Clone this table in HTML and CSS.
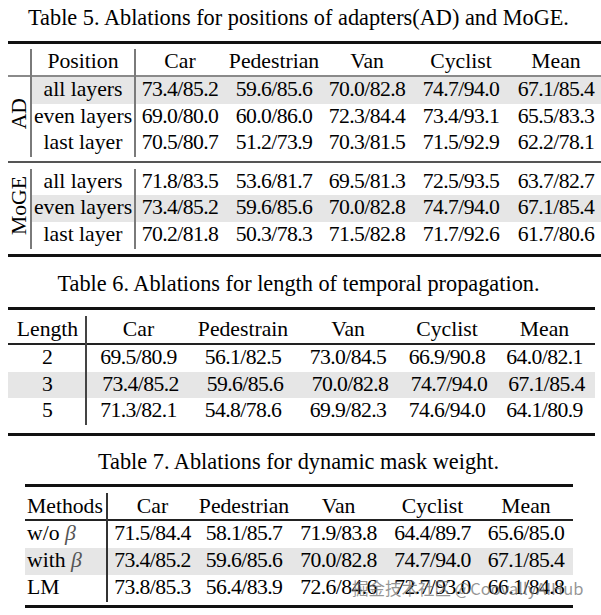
FILE: index.html
```html
<!DOCTYPE html>
<html>
<head>
<meta charset="utf-8">
<link rel="stylesheet" href="styles.css">
</head>
<body>
<div class="cap cap5">Table 5. Ablations for positions of adapters(AD) and MoGE.</div>
<table class="tbl t5">
  <colgroup><col><col><col><col><col><col><col><col></colgroup>
  <tr class="sp"><td colspan="8"></td></tr>
  <tr class="hd"><td></td><td class="pos">Position</td><td>Car</td><td>Pedestrian</td><td>Van</td><td>Cyclist</td><td>Mean</td><td></td></tr>
  <tr class="r27 hl"><td class="grp" rowspan="3"><span class="rot">AD</span></td><td class="pos">all layers</td><td class="n">73.4/85.2</td><td class="n">59.6/85.6</td><td class="n">70.0/82.8</td><td class="n">74.7/94.0</td><td class="n">67.1/85.4</td><td></td></tr>
  <tr class="r26"><td class="pos">even layers</td><td class="n">69.0/80.0</td><td class="n">60.0/86.0</td><td class="n">72.3/84.4</td><td class="n">73.4/93.1</td><td class="n">65.5/83.3</td><td></td></tr>
  <tr class="r27"><td class="pos">last layer</td><td class="n">70.5/80.7</td><td class="n">51.2/73.9</td><td class="n">70.3/81.5</td><td class="n">71.5/92.9</td><td class="n">62.2/78.1</td><td></td></tr>
  <tr class="sep"><td colspan="8"><div class="midrule"></div></td></tr>
  <tr class="r26"><td class="grp" rowspan="3"><span class="rot">MoGE</span></td><td class="pos">all layers</td><td class="n">71.8/83.5</td><td class="n">53.6/81.7</td><td class="n">69.5/81.3</td><td class="n">72.5/93.5</td><td class="n">63.7/82.7</td><td></td></tr>
  <tr class="r27 hl"><td class="pos">even layers</td><td class="n">73.4/85.2</td><td class="n">59.6/85.6</td><td class="n">70.0/82.8</td><td class="n">74.7/94.0</td><td class="n">67.1/85.4</td><td></td></tr>
  <tr class="r27"><td class="pos">last layer</td><td class="n">70.2/81.8</td><td class="n">50.3/78.3</td><td class="n">71.5/82.8</td><td class="n">71.7/92.6</td><td class="n">61.7/80.6</td><td></td></tr>
  <tr class="sp5"><td colspan="8"></td></tr>
</table>

<div class="cap cap6">Table 6. Ablations for length of temporal propagation.</div>
<table class="tbl t6">
  <colgroup><col><col><col><col><col><col></colgroup>
  <tr class="sp"><td colspan="6"></td></tr>
  <tr class="hd"><td class="first">Length</td><td>Car</td><td>Pedestrain</td><td>Van</td><td>Cyclist</td><td>Mean</td></tr>
  <tr class="r27"><td class="first">2</td><td class="n">69.5/80.9</td><td class="n">56.1/82.5</td><td class="n">73.0/84.5</td><td class="n">66.9/90.8</td><td class="n">64.0/82.1</td></tr>
  <tr class="r26 hl shift"><td class="first">3</td><td class="n">73.4/85.2</td><td class="n">59.6/85.6</td><td class="n">70.0/82.8</td><td class="n">74.7/94.0</td><td class="n">67.1/85.4</td></tr>
  <tr class="r27"><td class="first">5</td><td class="n">71.3/82.1</td><td class="n">54.8/78.6</td><td class="n">69.9/82.3</td><td class="n">74.6/94.0</td><td class="n">64.1/80.9</td></tr>
  <tr class="sp8"><td colspan="6"></td></tr>
</table>

<div class="cap cap7">Table 7. Ablations for dynamic mask weight.</div>
<table class="tbl t7">
  <colgroup><col><col><col><col><col><col></colgroup>
  <tr class="sp"><td colspan="6"></td></tr>
  <tr class="hd"><td class="first">Methods</td><td>Car</td><td>Pedestrian</td><td>Van</td><td>Cyclist</td><td>Mean</td></tr>
  <tr class="r27"><td class="first">w/o <span class="beta">β</span></td><td class="n">71.5/84.4</td><td class="n">58.1/85.7</td><td class="n">71.9/83.8</td><td class="n">64.4/89.7</td><td class="n">65.6/85.0</td></tr>
  <tr class="r27 hl"><td class="first">with <span class="beta">β</span></td><td class="n">73.4/85.2</td><td class="n">59.6/85.6</td><td class="n">70.0/82.8</td><td class="n">74.7/94.0</td><td class="n">67.1/85.4</td></tr>
  <tr class="r27"><td class="first">LM</td><td class="n">73.8/85.3</td><td class="n">56.4/83.9</td><td class="n">72.6/84.6</td><td class="n">72.7/93.0</td><td class="n">66.1/84.8</td></tr>
  <tr class="sp3"><td colspan="6"></td></tr>
</table>

<div class="wm">掘金技术社区 @CoovallyAIHub</div>
</body>
</html>
```

FILE: styles.css
```css
html, body {
  margin: 0;
  padding: 0;
  overflow: hidden;
  background: #fff;
}

body {
  position: relative;
  width: 601px;
  height: 615px;
  font-family: "Liberation Serif", "Times New Roman", serif;
  color: #000;
}

.cap {
  font-size: 22.3px;
  line-height: 26px;
  text-align: center;
  padding-right: 4px;
  white-space: nowrap;
}
.cap5 { margin-top: 5px; }
.cap6 { margin-top: 14px; }
.cap7 { margin-top: 13px; }

.tbl {
  border-collapse: separate;
  border-spacing: 0;
  table-layout: fixed;
  font-size: 21.7px;
  line-height: 25px;
  border-top: 3px solid #111;
  border-bottom: 3px solid #111;
}

.tbl td {
  padding: 0;
  text-align: center;
  vertical-align: top;
  white-space: nowrap;
  overflow: visible;
}

.tbl .sp td { height: 5px; line-height: 0; font-size: 0; }
.tbl .sp5 td { height: 5px; line-height: 0; font-size: 0; }
.tbl .sp8 td { height: 8px; line-height: 0; font-size: 0; }
.tbl .sp3 td { height: 3px; line-height: 0; font-size: 0; }
.tbl .r26 { height: 26px; }
.tbl .r27 { height: 27px; }
.tbl .hl td { background: #e6e6e6; }
.tbl .hl td.grp { background: #fff; }

.n { letter-spacing: -0.6px; }

/* Table 5 */
.t5 {
  width: 600px;
  margin: 10px 0 0 8px;
}
.t5 col:nth-child(1) { width: 22px; }
.t5 col:nth-child(2) { width: 106px; }
.t5 col:nth-child(3) { width: 88px; }
.t5 col:nth-child(4) { width: 100px; }
.t5 col:nth-child(5) { width: 86px; }
.t5 col:nth-child(6) { width: 102px; }
.t5 col:nth-child(7) { width: 88px; }
.t5 col:nth-child(8) { width: 8px; }

.t5 .hd { height: 28px; }
.t5 .hd td { box-shadow: inset 0 -2px #8a8a8a; }
.t5 .hd td.pos {
  box-shadow: inset 2px 0 #7a7a7a, inset -2px 0 #7a7a7a, inset 0 -2px #8a8a8a;
}
.t5 td.pos { box-shadow: inset 2px 0 #7a7a7a, inset -2px 0 #7a7a7a; }

.t5 .sep td { height: 12px; line-height: 0; font-size: 0; vertical-align: top; }
.midrule {
  height: 2px;
  margin-top: 4px;
  background: #555;
}

.grp {
  vertical-align: middle !important;
  text-align: center;
}
.rot {
  display: inline-block;
  writing-mode: vertical-rl;
  transform: rotate(180deg);
  line-height: 22px;
}

/* Table 6 */
.t6 {
  width: 587px;
  margin: 10px 0 0 8px;
}
.t6 col:nth-child(1) { width: 79px; }
.t6 col:nth-child(2) { width: 103px; }
.t6 col:nth-child(3) { width: 106px; }
.t6 col:nth-child(4) { width: 104px; }
.t6 col:nth-child(5) { width: 94px; }
.t6 col:nth-child(6) { width: 101px; }
.t6 .sp td { height: 6px; }
.t6 .hd { height: 29px; }
.t6 .hd td { padding-top: 1px; box-shadow: inset 0 -2px #222; }
.t6 .hd td.first { box-shadow: inset -2px 0 #444, inset 0 -2px #222; }
.t6 td.first { box-shadow: inset -2px 0 #444; }
.t6 .sp8 td.first, .t6 .sp td.first { box-shadow: none; }
.t6 .shift td.n { padding-left: 4px; }

/* Table 7 */
.t7 {
  width: 548px;
  margin: 9px 0 0 25px;
}
.t7 col:nth-child(1) { width: 83px; }
.t7 col:nth-child(2) { width: 89px; }
.t7 col:nth-child(3) { width: 94px; }
.t7 col:nth-child(4) { width: 95px; }
.t7 col:nth-child(5) { width: 93px; }
.t7 col:nth-child(6) { width: 94px; }
.t7 .sp td { height: 6px; }
.t7 .hd { height: 28px; }
.t7 .hd td { padding-top: 1px; box-shadow: inset 0 -2px #222; }
.t7 td.first {
  text-align: left;
  padding-left: 2px;
  box-shadow: inset -2px 0 #333;
}
.t7 .hd td.first { box-shadow: inset -2px 0 #333, inset 0 -2px #222; }

.beta {
  font-style: italic;
  color: #555;
}

.wm {
  position: absolute;
  left: 352px;
  top: 578px;
  font-family: "Noto Sans CJK SC", "Noto Sans", sans-serif;
  font-size: 16.5px;
  line-height: 20px;
  color: rgba(115, 115, 115, 0.75);
  white-space: nowrap;
}
```
